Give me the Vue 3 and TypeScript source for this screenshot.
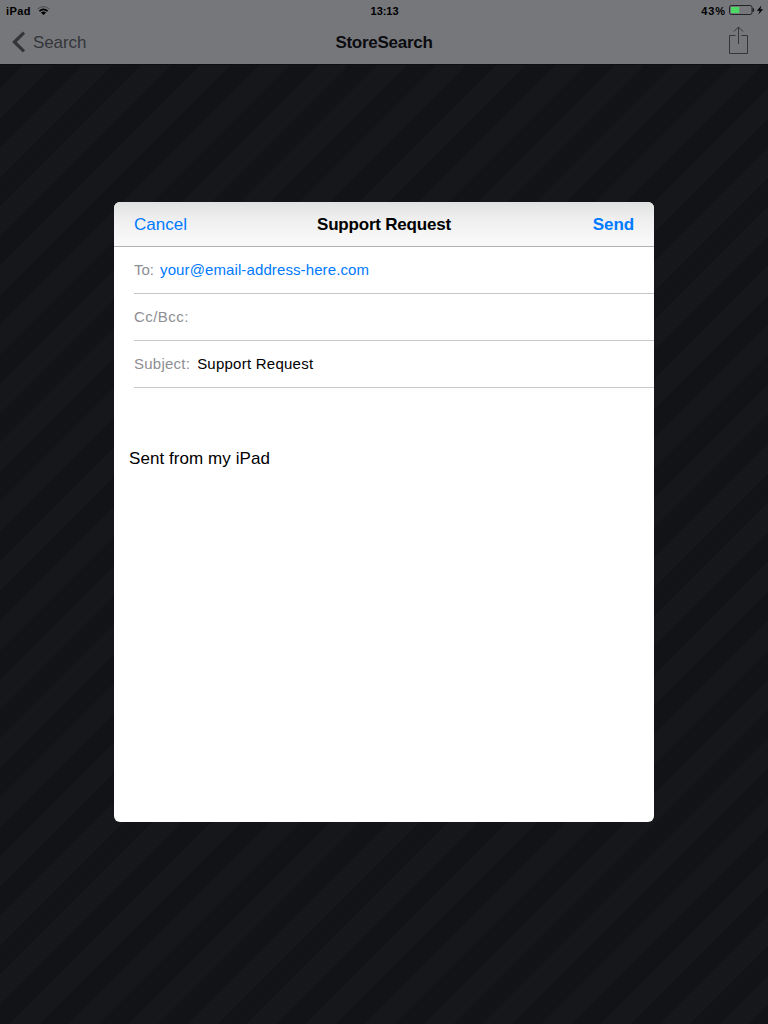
<script setup lang="ts">
interface Field {
  key: string
  label: string
  value: string
}

const fields: Field[] = [
  { key: 'to', label: 'To:', value: 'your@email-address-here.com' },
  { key: 'cc', label: 'Cc/Bcc:', value: '' },
  { key: 'subject', label: 'Subject:', value: 'Support Request' },
]
</script>

<template>
  <div class="screen">
    <header class="top">
      <div class="status">
        <div class="side">
          <span class="device">iPad</span>
          <svg class="wifi" width="13" height="9" viewBox="0 0 13 9">
            <path d="M.5 3.1Q6.500-1.700 12.500 3.100" fill="none" stroke="#505155" stroke-width="1.2" />
            <path d="M2.400 5.200Q6.500 1.600 10.600 5.200" fill="none" stroke="#000" stroke-width="1.700" />
            <path d="M3.900 6.600Q6.500 4.600 9.100 6.600L6.500 9Z" fill="#000" />
          </svg>
        </div>
        <span class="clock">13:13</span>
        <div class="side right">
          <span class="percent">43%</span>
          <svg class="battery" width="35" height="12" viewBox="0 0 35 12">
            <rect x=".5" y="1.5" width="22.500" height="9" rx="1.8" fill="none" stroke="#222326" />
            <rect x="2" y="3" width="8.200" height="6" fill="#4cd964" />
            <path d="M24 4.200Q25.900 6 24 7.800Z" fill="#111" stroke="#111" stroke-width=".6" />
            <path d="M32.400 1.600L27.900 6.700H30.700L29.300 10.600L34.200 5.200H31.400Z" fill="#000" />
          </svg>
        </div>
      </div>
      <nav class="nav">
        <div class="side back">
          <svg width="14" height="22" viewBox="0 0 14 22">
            <path d="M12 1.6L2.4 11L12 20.4" fill="none" stroke="#343539" stroke-width="3.2" />
          </svg>
          <span class="back-label">Search</span>
        </div>
        <h1 class="title">StoreSearch</h1>
        <div class="side right">
          <svg class="share" width="20" height="28" viewBox="0 0 20 28">
            <path d="M7.500 9.500H1.500V27.500H19.500V9.500H13.500M10.500 18V1M6 5.500L10.500 1L15 5.500" fill="none" stroke="#343539" stroke-width="1" />
          </svg>
        </div>
      </nav>
    </header>

    <section class="sheet">
      <div class="sheet-bar">
        <span class="cancel">Cancel</span>
        <h2 class="sheet-title">Support Request</h2>
        <span class="send">Send</span>
      </div>
      <div v-for="field in fields" :key="field.key" class="field" :class="field.key">
        <span class="label">{{ field.label }}</span>
        <span v-if="field.value" class="value">{{ field.value }}</span>
      </div>
      <p class="message">Sent from my iPad</p>
    </section>
  </div>
</template>

<style>
body {
  margin: 0;
}
</style>

<style scoped>
.screen {
  position: relative;
  width: 768px;
  height: 1024px;
  overflow: hidden;
  font-family: "Liberation Sans", Arial, sans-serif;
  background: repeating-linear-gradient(
    135deg,
    #121317 0,
    #121317 20.6px,
    #16171b 20.6px,
    #16171b 41.79px
  );
}

.top {
  box-sizing: border-box;
  height: 65px;
  background: #76777b;
  border-bottom: 1px solid #0d0e11;
}

.status {
  display: flex;
  height: 20px;
  padding: 1px 5px 0 6px;
  box-sizing: border-box;
  align-items: center;
  font-size: 11px;
  font-weight: bold;
  color: #000;
}

.side {
  display: flex;
  flex: 1;
  align-items: center;
}

.right {
  justify-content: flex-end;
}

.device {
  letter-spacing: 0.4px;
}

.wifi {
  margin-left: 6px;
}

.clock {
  letter-spacing: -0.05px;
}

.percent {
  letter-spacing: 0.9px;
  margin-right: 3px;
}

.battery {
  margin: -1px -1px 0 0;
}

.nav {
  display: flex;
  height: 44px;
  align-items: center;
  padding: 0 20px 0 12px;
}

.back {
  color: #343539;
  font-size: 17px;
}

.back-label {
  margin-left: 7px;
  padding-top: 1px;
  letter-spacing: -0.1px;
}

.title {
  margin: 0 0 0 8px;
  padding-top: 1px;
  font-size: 17px;
  letter-spacing: -0.27px;
  color: #0b0c10;
}

.share {
  margin-top: -4px;
}

.sheet {
  position: absolute;
  left: 114px;
  top: 202px;
  width: 540px;
  height: 620px;
  overflow: hidden;
  border-radius: 6px;
  background: #fff;
}

.sheet-bar {
  display: grid;
  grid-template-columns: 1fr auto 1fr;
  align-items: center;
  box-sizing: border-box;
  height: 45px;
  padding: 1px 20px 0;
  border-bottom: 1px solid #b2b2b2;
  background: linear-gradient(#e0e1e1, #eeeeee 35%, #f8f8f8 85%);
  font-size: 17px;
}

.cancel {
  color: #007aff;
}

.sheet-title {
  margin: 0;
  font-size: 17px;
  letter-spacing: -0.2px;
  color: #000;
}

.send {
  justify-self: end;
  font-weight: bold;
  color: #007aff;
  letter-spacing: -0.1px;
}

.field {
  display: flex;
  box-sizing: border-box;
  height: 47px;
  margin-left: 20px;
  padding-bottom: 1px;
  align-items: center;
  border-bottom: 1px solid #c8c7cc;
  font-size: 15px;
}

.label {
  color: #8e8e93;
}

.value {
  margin-left: 6px;
  color: #000;
  letter-spacing: 0.24px;
}

.to .value {
  color: #007aff;
  letter-spacing: 0.11px;
}

.cc .label {
  letter-spacing: 0.45px;
}

.subject .label {
  letter-spacing: 0.24px;
}

.subject .value {
  margin-left: 7px;
}

.message {
  margin: 61px 0 0 15px;
  font-size: 17px;
  line-height: 20px;
  letter-spacing: 0.07px;
  color: #000;
}
</style>
